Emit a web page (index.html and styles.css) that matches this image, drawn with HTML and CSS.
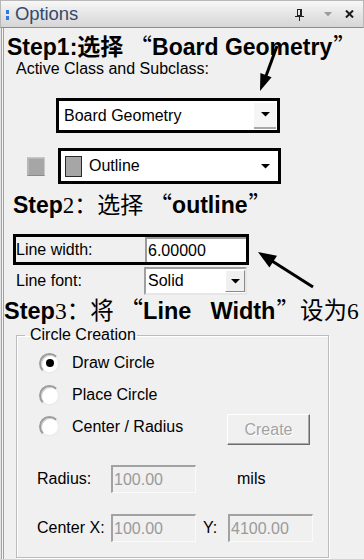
FILE: index.html
```html
<!DOCTYPE html>
<html>
<head>
<meta charset="utf-8">
<link rel="stylesheet" href="styles.css">
</head>
<body>
<div class="panel">
  <div class="titlebar">
    <span class="grip"><i></i><i></i></span>
    <span class="title">Options</span>
    <span class="tools">
      <svg class="pin" width="10" height="12" viewBox="0 0 10 12"><rect x="2.5" y="0.5" width="4" height="6" fill="none" stroke="#202020"/><rect x="5" y="1" width="1.5" height="5" fill="#202020"/><line x1="0" y1="7.5" x2="9" y2="7.5" stroke="#202020"/><line x1="4.5" y1="8" x2="4.5" y2="12" stroke="#202020"/></svg>
      <svg class="menu" width="8" height="5" viewBox="0 0 8 5"><polygon points="0,0 8,0 4,4.5" fill="#9c9c9c"/></svg>
      <svg class="close" width="9" height="8" viewBox="0 0 9 8"><path d="M1 0.5 L8 7.5 M8 0.5 L1 7.5" stroke="#1a1a1a" stroke-width="2"/></svg>
    </span>
  </div>
  <div class="content">
    <div class="step step1">Step1:<span class="cjk">选择</span><span class="cjk q qo">“</span>Board Geometry<span class="cjk q qc">”</span></div>
    <div class="active-label">Active Class and Subclass:</div>
    <div class="hl combo1">
      <span class="combo-text">Board Geometry</span>
      <span class="dd btn"><svg width="9" height="5" viewBox="0 0 9 5"><polygon points="0,0 9,0 4.5,4.5" fill="#000"/></svg></span>
    </div>
    <div class="row2">
      <span class="chk"></span>
      <div class="hl combo2">
        <span class="swatch"></span>
        <span class="combo-text">Outline</span>
        <span class="dd"><svg width="9" height="5" viewBox="0 0 9 5"><polygon points="0,0 9,0 4.5,4.5" fill="#000"/></svg></span>
      </div>
    </div>
    <div class="step step2">Step<span class="serif">2</span><span class="cjk thin">：选择</span><span class="cjk q qo">“</span>outline<span class="cjk q qc">”</span></div>
    <div class="hl lw">
      <span class="lbl">Line width:</span>
      <span class="field">6.00000</span>
    </div>
    <div class="lf">
      <span class="lbl">Line font:</span>
      <span class="select"><span>Solid</span><span class="sbtn"><svg width="9" height="5" viewBox="0 0 9 5"><polygon points="0,0 9,0 4.5,4.5" fill="#000"/></svg></span></span>
    </div>
    <div class="step step3">Step<span class="serif">3</span><span class="cjk thin">：将</span><span class="cjk q qo">“</span>Line&nbsp; Width<span class="cjk q qc">”</span><span class="cjk thin">设为</span><span class="serif">6</span></div>
    <fieldset class="group">
      <legend>Circle Creation</legend>
      <div class="radio-row"><span class="radio on"></span><span>Draw Circle</span></div>
      <div class="radio-row"><span class="radio"></span><span>Place Circle</span></div>
      <div class="radio-row last"><span class="radio"></span><span>Center / Radius</span><span class="create">Create</span></div>
      <div class="field-row r1"><span class="flbl">Radius:</span><span class="dis">100.00</span><span class="mils">mils</span></div>
      <div class="field-row r2"><span class="flbl">Center X:</span><span class="dis">100.00</span><span class="ylbl">Y:</span><span class="dis">4100.00</span></div>
    </fieldset>
  </div>
  <svg class="arrows" width="364" height="559" viewBox="0 0 364 559">
    <line x1="277" y1="46" x2="266" y2="76" stroke="#000" stroke-width="3"/>
    <polygon points="260,91 271.6,77.2 260.4,73" fill="#000"/>
    <line x1="313" y1="287" x2="272" y2="261" stroke="#000" stroke-width="3"/>
    <polygon points="258,252 277,255.8 269.4,267.6" fill="#000"/>
  </svg>
</div>
</body>
</html>
```
FILE: styles.css
```css
html, body {
  margin: 0;
  padding: 0;
}
body {
  width: 364px;
  height: 559px;
  overflow: hidden;
  background: #f0f0f0;
  font-family: "Liberation Sans", Arial, sans-serif;
  font-size: 16px;
  color: #000;
}
.panel {
  position: relative;
  height: 559px;
  background: linear-gradient(to right, #e4e4e4 0 1px, #a4a4a4 1px 2px, #f4f4f4 2px 3px, #f0f0f0 3px);
}
.titlebar {
  box-sizing: border-box;
  height: 28px;
  display: flex;
  align-items: center;
  background: linear-gradient(#f7f7f7, #e2e2e2 60%, #d6d6d6);
  border: 1px solid #b8b8b8;
  border-bottom-color: #8c8c8c;
  padding-left: 5px;
}
.grip {
  display: flex;
  flex-direction: column;
  gap: 2px;
  margin-right: 6px;
  margin-top: 1px;
}
.grip i {
  display: block;
  width: 3px;
  height: 4px;
  background: #2d7be0;
}
.title {
  font-size: 18.5px;
  color: #34496c;
  letter-spacing: -0.1px;
}
.tools {
  margin-left: auto;
  display: flex;
  align-items: center;
  margin-right: 9px;
}
.pin { margin-right: 19px; margin-top: 2px; }
.menu { margin-right: 13px; }

.content {
  margin-left: 3px;
  border-left: 1px solid #a0a0a0;
  padding-top: 4px;
  height: 531px;
}
.step {
  font-weight: bold;
  white-space: nowrap;
}
.cjk {
  font-family: "Noto Sans CJK SC", sans-serif;
}
.thin { font-weight: 400; }
.serif {
  font-family: "Liberation Serif", serif;
  font-weight: 400;
}
.q {
  font-weight: 400;
  display: inline-block;
}
.qo { width: 1.25em; text-align: right; }
.qc { width: 1em; text-align: left; margin-left: 1px; }
.step1 {
  font-size: 23px;
  line-height: 26px;
  height: 26px;
  margin-left: 3px;
}
.active-label {
  line-height: 18px;
  height: 18px;
  margin: 2px 0 0 12px;
}
.hl {
  box-sizing: border-box;
  border: 3px solid #000;
  background: #fff;
  display: flex;
  align-items: center;
}
.combo1 {
  margin: 20px 0 0 52px;
  width: 224px;
  height: 35px;
}
.combo-text { margin-left: 5px; }
.dd {
  margin-left: auto;
  width: 22px;
  height: 26px;
  display: flex;
  align-items: center;
  justify-content: center;
}
.dd.btn {
  background: #f5f5f5;
  border-bottom: 2px solid #a8a8a8;
  box-sizing: border-box;
  margin-right: 1px;
}
.row2 {
  display: flex;
  align-items: center;
  margin-top: 15px;
  height: 36px;
}
.chk {
  box-sizing: border-box;
  width: 18px;
  height: 19px;
  margin-left: 23px;
  background: #a6a6a6;
  border: 1px solid #c8c8c8;
  border-left-color: #b6b6b6;
  border-bottom-color: #8a8a8a;
  box-shadow: inset 1px 1px #b8b8b8;
}
.combo2 {
  margin-left: 13px;
  width: 223px;
  height: 36px;
}
.swatch {
  box-sizing: border-box;
  width: 17px;
  height: 21px;
  margin-left: 4px;
  background: #a6a6a6;
  border: 1px solid #2a2a2a;
}
.combo2 .combo-text { margin-left: 7px; }
.combo2 .dd { margin-right: 2px; }
.step2 {
  font-size: 23px;
  line-height: 24px;
  height: 24px;
  margin: 7px 0 0 9px;
}
.lw {
  margin: 19px 0 0 9px;
  width: 236px;
  height: 31px;
  background: #f0f0f0;
  align-items: stretch;
}
.lw .lbl {
  width: 129px;
  display: flex;
  align-items: center;
}
.field {
  flex: 1;
  background: #fff;
  border-left: 2px solid #9a9a9a;
  border-top: 2px solid #9a9a9a;
  padding-left: 1px;
  display: flex;
  align-items: center;
}
.lf {
  display: flex;
  align-items: center;
  margin: 2px 0 0 12px;
  height: 28px;
}
.lf .lbl { width: 128px; }
.select {
  box-sizing: border-box;
  width: 103px;
  height: 28px;
  background: #fff;
  border: 2px solid #a0a0a0;
  border-right-color: #e6e6e6;
  border-bottom-color: #e6e6e6;
  display: flex;
  align-items: center;
  padding-left: 2px;
}
.sbtn {
  margin-left: auto;
  width: 20px;
  height: 22px;
  background: #f0f0f0;
  border: 1px solid #fff;
  border-right-color: #8a8a8a;
  border-bottom-color: #8a8a8a;
  box-sizing: border-box;
  display: flex;
  align-items: center;
  justify-content: center;
}
.step3 {
  font-size: 23.5px;
  line-height: 24px;
  height: 24px;
  margin: 2px 0 0 0;
  word-spacing: 3px;
}
.group {
  box-sizing: border-box;
  margin: 5px 0 0 12px;
  padding: 0;
  min-width: 0;
  width: 313px;
  height: 232px;
  border: 1px solid #bcbcbc;
  box-shadow: 1px 1px 0 #fff, inset 1px 1px 0 #fff;
}
.group legend {
  margin-left: 8px;
  padding: 0 1px 0 5px;
  line-height: 18px;
}
.radio-row {
  display: flex;
  align-items: center;
  height: 32px;
  padding-left: 22px;
}
.radio-row:first-of-type { margin-top: 3px; }
.radio {
  box-sizing: border-box;
  width: 21px;
  height: 21px;
  border-radius: 50%;
  background: #fff;
  border: 2px solid;
  border-color: #9c9c9c #ececec #ececec #9c9c9c;
  margin-right: 12px;
  position: relative;
  box-shadow: inset 1px 1px 0 #d0d0d0;
}
.radio.on::after {
  content: "";
  position: absolute;
  left: 4.5px;
  top: 4.5px;
  width: 8px;
  height: 8px;
  border-radius: 50%;
  background: #000;
}
.radio-row.last {
  align-items: flex-start;
  height: 34px;
  line-height: 32px;
}
.radio-row.last .radio { margin-top: 5px; }
.create {
  box-sizing: border-box;
  margin-left: auto;
  margin-right: 18px;
  margin-top: 3px;
  width: 83px;
  height: 31px;
  line-height: 29px;
  text-align: center;
  color: #a3a3a3;
  text-shadow: 1px 1px 0 #fff;
  border: 1px solid;
  border-color: #fff #6c6c6c #6c6c6c #fff;
  box-shadow: inset -1px -1px 0 #a8a8a8;
}
.field-row {
  display: flex;
  align-items: center;
  height: 28px;
  padding-left: 20px;
}
.r1 { margin-top: 20px; }
.r2 { margin-top: 21px; }
.flbl { width: 74px; }
.dis {
  box-sizing: border-box;
  width: 85px;
  height: 28px;
  border: 2px solid #a2a2a2;
  border-right: 1px solid #fafafa;
  border-bottom: 1px solid #fafafa;
  color: #9a9a9a;
  padding-left: 1px;
  display: flex;
  align-items: center;
}
.mils { margin-left: 41px; }
.ylbl { margin-left: 7px; width: 25px; }
.arrows {
  position: absolute;
  left: 0;
  top: 0;
  pointer-events: none;
}
```
